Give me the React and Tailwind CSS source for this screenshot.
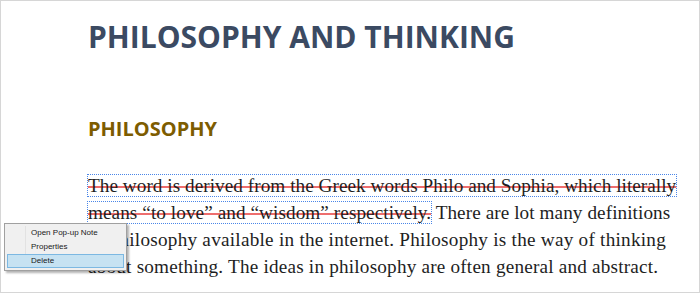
import React from "react";

const menuItems = ["Open Pop-up Note", "Properties", "Delete"];

// struck-out annotation: dotted frame plus a red line drawn through the text
const struck =
  "outline-1 outline-dotted outline-[#4a86e8] underline decoration-[#ee6e6e] decoration-[1.5px] underline-offset-[-6px] [text-decoration-skip-ink:none]";

export default function App() {
  return (
    <div className="relative w-[700px] h-[293px] overflow-hidden bg-white border border-[#d6d6d6]">
      <div className="pl-[87px] pt-[21px]">
        <h1
          className="text-[30px] leading-[30px] font-bold text-[#3b4a62]"
          style={{ fontFamily: '"Open Sans", sans-serif' }}
        >
          PHILOSOPHY AND THINKING
        </h1>
        <h2
          className="mt-[67px] text-[20px] leading-[20px] font-bold text-[#7d5c00]"
          style={{ fontFamily: '"Open Sans", sans-serif' }}
        >
          PHILOSOPHY
        </h2>

        <div
          className="mt-[33px] text-[19.2px] leading-[27px] text-[#1e1e1e] whitespace-nowrap"
          style={{ fontFamily: '"Liberation Serif", serif' }}
        >
          <div className="tracking-[0.05px]">
            <span className={struck}>
              The word is derived from the Greek words Philo and Sophia, which literally
            </span>
          </div>
          <div className="tracking-[0.08px]">
            <span className={struck}>means “to love” and “wisdom” respectively.</span> There are lot
            many definitions
          </div>
          <div className="tracking-[0.25px]">
            of philosophy available in the internet. Philosophy is the way of thinking
          </div>
          <div className="tracking-[0.2px]">
            about something. The ideas in philosophy are often general and abstract.
          </div>
        </div>
      </div>

      {/* context menu */}
      <div
        className="absolute left-[3px] top-[222px] w-[123px] border border-[#a0a0a0] bg-[#f0f0f0] p-[2px] shadow-[2px_2px_2px_rgba(0,0,0,0.3)]"
        style={{ fontFamily: '"Liberation Sans", sans-serif' }}
      >
        <div className="absolute left-[20px] top-[2px] bottom-[2px] w-px bg-[#e2e2e2]" />
        {menuItems.map((item) => (
          <div
            key={item}
            className={
              item === "Delete"
                ? "relative h-[14px] flex items-center pl-[23px] text-[8px] text-[#1a1a1a] bg-[#c6e2f2] border border-[#7cb8e2]"
                : "relative h-[14px] flex items-center pl-[24px] text-[8px] text-[#1a1a1a]"
            }
          >
            {item}
          </div>
        ))}
      </div>
    </div>
  );
}
